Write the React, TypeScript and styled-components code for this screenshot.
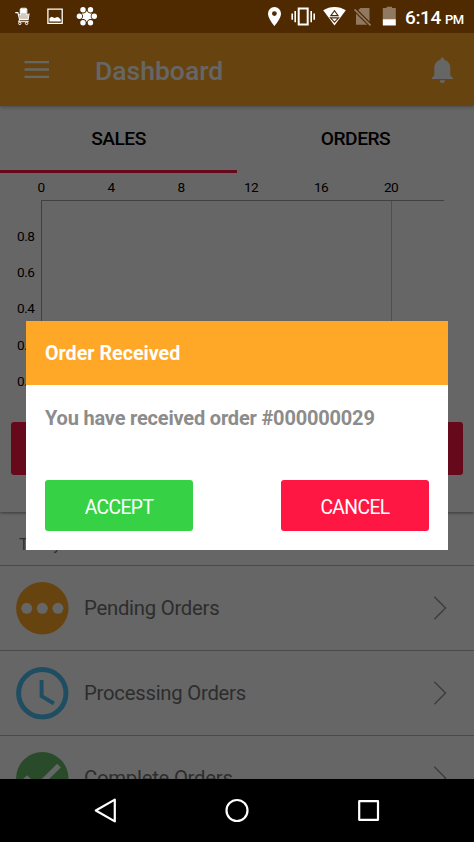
import React from "react";
import styled, { createGlobalStyle } from "styled-components";

const GlobalStyle = createGlobalStyle`
  *, *::before, *::after { box-sizing: border-box; }
  body { margin: 0; background: #000; font-family: Roboto, "Liberation Sans", sans-serif; }
  svg { display: block; flex: none; }
  button { font-family: inherit; }
`;

const Phone = styled.div`
  width: 474px;
  height: 842px;
  display: flex;
  flex-direction: column;
  overflow: hidden;
  background: #000;
`;

const StatusBar = styled.header`
  height: 33px;
  flex: none;
  display: flex;
  justify-content: space-between;
  background: #4f2900;
`;

const Time = styled.div`
  display: flex;
  align-items: baseline;
  width: 69px;
  padding-top: 6px;
  color: #fff;
  font-size: 19px;
  font-weight: 500;
  line-height: 23px;
  letter-spacing: -0.35px;
  white-space: nowrap;
`;

const Meridiem = styled.span`
  margin-left: 4px;
  font-size: 13px;
  letter-spacing: -0.5px;
`;

const StatusGroup = styled.div`
  display: flex;
`;

const Screen = styled.main`
  position: relative;
  height: 746px;
  flex: none;
  overflow: hidden;
  background: #fff;
`;

const Backdrop = styled.div`
  position: absolute;
  inset: 0;
  display: flex;
  align-items: flex-start;
  padding: 288px 26px 0;
  background: rgba(0, 0, 0, 0.6);
`;

const AppBar = styled.div`
  position: relative;
  height: 73px;
  display: flex;
  align-items: center;
  padding: 3px 20px 0 24px;
  background: #ffa726;
  box-shadow: 0 1px 4px rgba(0, 0, 0, 0.3);
`;

const Title = styled.h1`
  flex: 1;
  margin: 0 0 0 46px;
  color: #fff;
  font-size: 26.5px;
  font-weight: 500;
  line-height: 32px;
`;

const SalesCard = styled.section`
  height: 406px;
  background: #fff;
  box-shadow: 0 1px 3px rgba(0, 0, 0, 0.45);
`;

const Tabs = styled.nav`
  display: grid;
  grid-template-columns: 1fr 1fr;
  height: 64px;
`;

const Tab = styled.div<{ $active?: boolean }>`
  padding-top: 2px;
  border-bottom: 3px solid ${(p) => (p.$active ? "#ff1744" : "transparent")};
  color: #000;
  font-size: 19.2px;
  font-weight: 500;
  line-height: 62px;
  letter-spacing: -0.5px;
  text-align: center;
`;

const Chart = styled.svg`
  height: 252px;
  font-size: 13.6px;
  letter-spacing: -0.45px;
  fill: #000;
`;

const CardButton = styled.div`
  height: 53px;
  margin: 0 11px;
  border-radius: 3px;
  background: #ff1744;
`;

const OrderList = styled.section`
  margin-top: 10px;
  background: #fff;
`;

const ListHeader = styled.div`
  height: 44px;
  padding-left: 19px;
  border-bottom: 1px solid #b8b8b8;
  color: #777;
  font-size: 16px;
  letter-spacing: -0.3px;
  line-height: 45px;
`;

const Row = styled.div`
  height: 85px;
  display: flex;
  align-items: center;
  padding: 0 27px 0 16px;
  border-bottom: 1px solid #b8b8b8;
`;

const RowLabel = styled.span`
  flex: 1;
  padding-left: 15px;
  color: #727272;
  font-size: 20.3px;
  line-height: 26px;
  letter-spacing: -0.24px;
`;

const Dialog = styled.section`
  width: 422px;
  height: 229px;
  background: #fff;
`;

const DialogTitle = styled.h2`
  height: 64px;
  margin: 0;
  padding: 1px 19px 0;
  background: #ffa726;
  color: #fff;
  font-size: 19.7px;
  font-weight: 700;
  line-height: 64px;
`;

const DialogMessage = styled.p`
  height: 95px;
  margin: 0;
  padding: 20px 19px 0;
  color: #8c8c8c;
  font-size: 20px;
  font-weight: 700;
  line-height: 26px;
  letter-spacing: -0.19px;
  white-space: nowrap;
`;

const DialogActions = styled.div`
  display: flex;
  justify-content: space-between;
  padding: 0 19px;
`;

const ActionButton = styled.button<{ $color: string }>`
  width: 148px;
  height: 51px;
  padding: 3px 0 0;
  border: 0;
  border-radius: 3px;
  background: ${(p) => p.$color};
  color: #fff;
  font-size: 19.3px;
  letter-spacing: -0.6px;
`;

const NavBar = styled.footer`
  flex: 1;
  background: #000;
`;

const Notifications = () => (
  <svg width="110" height="33" viewBox="0 0 110 33" fill="none" stroke="#fff">
    <path d="M15.3 12.6h2.6l1.7 7h8.5l1-6.2M20.3 15.2V9.5l1.2-1.3h4.2l1.1 1.3v5.7" strokeWidth="1.1" />
    <path d="M20.7 8.8h5.7v5h-5.7z" fill="#fff" stroke="none" />
    <path d="M19 14h9.6l-.8 5h-8z" fill="#fff" fillOpacity=".75" stroke="none" />
    <path d="M19.7 19.4l-1.2 2.3h10.3" strokeWidth="1" />
    <circle cx="19.8" cy="23.4" r="1.2" />
    <circle cx="26.6" cy="23.4" r="1.2" />
    <path d="M47.9 9.2h14.3v14.2H47.9z" strokeWidth="1.3" />
    <path d="M49.4 21.6v-3.3l2.2-1.5 3 1.2 2.6-1 1.6.6 2 2.1v1.9z" fill="#fff" stroke="none" />
    <g fill="#fff" stroke="none">
      <path d="M86.8 10.7l1.7 2.8h3.3l-1.7 2.8 1.7 2.8h-3.3l-1.7 2.8-1.7-2.8h-3.3l1.7-2.8-1.7-2.8h3.3z" />
      <circle cx="86.8" cy="16.3" r="3.8" />
      <circle cx="79.4" cy="16.3" r="2.7" />
      <circle cx="94.3" cy="16.3" r="2.7" />
      <circle cx="83" cy="9.8" r="2.7" />
      <circle cx="90.5" cy="9.8" r="2.7" />
      <circle cx="83" cy="22.8" r="2.7" />
      <circle cx="90.5" cy="22.8" r="2.7" />
    </g>
  </svg>
);

const SystemIcons = () => (
  <svg width="137" height="33" viewBox="0 0 137 33" fill="#fff">
    <path fillRule="evenodd" d="M6.4 7A6.6 6.6 0 0 0 0 13.7c0 4.9 6.4 12.2 6.4 12.2S13 18.6 13 13.700A6.600 6.600 0 0 0 6.400 7zm0 4.200a2.400 2.400 0 1 1 0 4.800 2.400 2.400 0 0 1 0-4.800z" />
    <path d="M30.700 8.500h9v16h-9z" fill="none" stroke="#fff" strokeWidth="2" />
    <path d="M27.200 11v11.200M24.200 13.500v6.200M43.200 11v11.200M46.200 13.500v6.200" fill="none" stroke="#fff" strokeWidth="1.600" />
    <path d="M55.200 10.300C61.700 5.800 71.300 5.800 77.800 10.300L66.500 25.600z" />
    <path d="M62.900 15.600l3.600-4.900 3.600 4.900zM62.500 17.900h8l-4 4.200z" fill="none" stroke="#4f2900" strokeWidth="1.100" />
    <path d="M92.500 8h9v16.700H88V12z" fill="#917860" />
    <path d="M86.200 9l16.700 16.700" stroke="#4f2900" strokeWidth="4" />
    <path d="M86.500 9.300l16.100 16.100" stroke="#917860" strokeWidth="1.800" />
    <path d="M118.600 6.800h5.400V8h3.800v11.300h-13V8h3.800z" fill="#917860" />
    <path d="M114.800 19.200h13v6.300h-13z" />
  </svg>
);

const MenuIcon = () => (
  <svg width="25" height="20" viewBox="0 0 25 20">
    <path d="M.5 1.200h24.500M.5 8.500h24.500M.5 15.800h24.500" stroke="#fff" strokeWidth="2.300" />
  </svg>
);

const BellIcon = () => (
  <svg width="24" height="28" viewBox="0 0 24 28" fill="#fff">
    <path d="M12.300.500c1 0 1.700.7 1.700 1.700v.6c4 .9 6.300 4.100 6.300 8.200v7.400l2.500 2.500v1H1.700v-1l2.600-2.500V11c0-4.100 2.300-7.300 6.300-8.200v-.6c0-1 .7-1.700 1.700-1.700zM9.700 23.300h5.200a2.600 2.600 0 0 1-5.200 0z" />
  </svg>
);

const PendingIcon = () => (
  <svg width="53" height="53" viewBox="0 0 53 53">
    <circle cx="26.300" cy="26.300" r="26.200" fill="#ffa726" />
    <g fill="#fff">
      <circle cx="10.700" cy="26.300" r="5.500" />
      <circle cx="26.300" cy="26.300" r="5.500" />
      <circle cx="41.900" cy="26.300" r="5.500" />
    </g>
  </svg>
);

const ClockIcon = () => (
  <svg width="53" height="53" viewBox="0 0 53 53" fill="none" stroke="#4fc3f7">
    <circle cx="26.300" cy="26.300" r="23.700" strokeWidth="5" />
    <path d="M25.600 13v16.200l12.300 7.200" strokeWidth="4" />
  </svg>
);

const CheckIcon = () => (
  <svg width="53" height="53" viewBox="0 0 53 53">
    <circle cx="26.300" cy="26.300" r="26.200" fill="#66bb6a" />
    <path d="M9.300 25l10.900 11L43 13.700" fill="none" stroke="#fff" strokeWidth="5.200" />
  </svg>
);

const Chevron = () => (
  <svg width="14" height="26" viewBox="0 0 14 26">
    <path d="M1.300 1.700L12.500 13 1.300 24.300" fill="none" stroke="#9c9c9c" strokeWidth="1.500" />
  </svg>
);

const xTicks = ["0", "4", "8", "12", "16", "20"];
const yTicks = ["0.8", "0.6", "0.4", "0.2", "0.0"];

const SalesChart = () => (
  <Chart width="474" height="252" viewBox="0 0 474 252">
    {xTicks.map((t, i) => (
      <text key={t} x={41.1 + i * 70} y="21.800" textAnchor="middle">{t}</text>
    ))}
    {yTicks.map((t, i) => (
      <text key={t} x="34.500" y={70.5 + i * 36.4} textAnchor="end">{t}</text>
    ))}
    <path d="M41.500 252V30.500H444" fill="none" stroke="#a0a0a0" />
    <path d="M391.500 31v221" stroke="#f2b680" />
  </Chart>
);

const rows = [
  { label: "Pending Orders", Icon: PendingIcon },
  { label: "Processing Orders", Icon: ClockIcon },
  { label: "Complete Orders", Icon: CheckIcon },
];

export default function App() {
  return (
    <>
      <GlobalStyle />
      <Phone>
        <StatusBar>
          <Notifications />
          <StatusGroup>
            <SystemIcons />
            <Time>6:14<Meridiem>PM</Meridiem></Time>
          </StatusGroup>
        </StatusBar>
        <Screen>
          <AppBar>
            <MenuIcon />
            <Title>Dashboard</Title>
            <BellIcon />
          </AppBar>
          <SalesCard>
            <Tabs>
              <Tab $active>SALES</Tab>
              <Tab>ORDERS</Tab>
            </Tabs>
            <SalesChart />
            <CardButton />
          </SalesCard>
          <OrderList>
            <ListHeader>Today</ListHeader>
            {rows.map(({ label, Icon }) => (
              <Row key={label}>
                <Icon />
                <RowLabel>{label}</RowLabel>
                <Chevron />
              </Row>
            ))}
          </OrderList>
          <Backdrop>
            <Dialog role="dialog">
              <DialogTitle>Order Received</DialogTitle>
              <DialogMessage>You have received order #000000029</DialogMessage>
              <DialogActions>
                <ActionButton $color="#37d145">ACCEPT</ActionButton>
                <ActionButton $color="#ff1744">CANCEL</ActionButton>
              </DialogActions>
            </Dialog>
          </Backdrop>
        </Screen>
        <NavBar>
          <svg width="474" height="63" viewBox="0 0 474 63" fill="none" stroke="#fff" strokeWidth="2.200" strokeLinejoin="round">
            <path d="M95.800 31.500L114.800 20.600v21.800z" />
            <circle cx="237" cy="31.500" r="10.500" />
            <path d="M359.200 22.200h18.800v18.600h-18.800z" />
          </svg>
        </NavBar>
      </Phone>
    </>
  );
}
